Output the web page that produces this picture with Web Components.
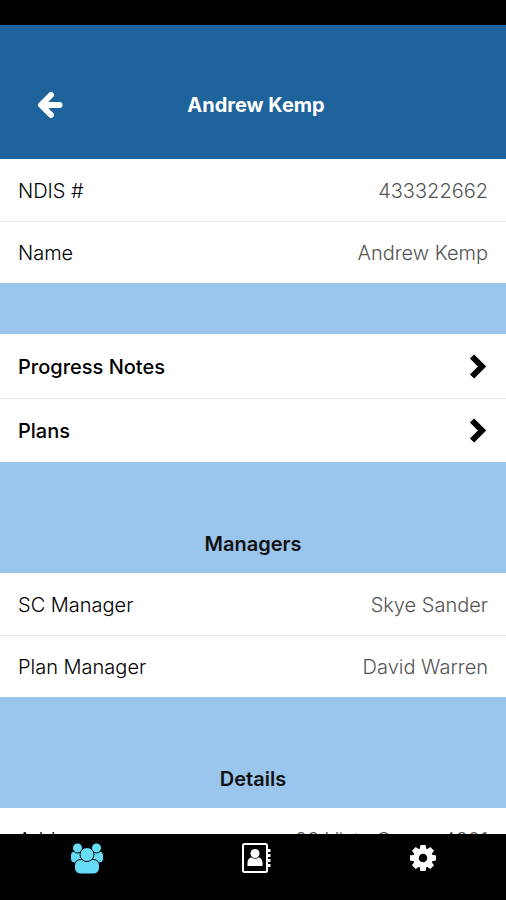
<!DOCTYPE html>
<html lang="en">
<head>
<meta charset="utf-8">
<meta name="viewport" content="width=device-width, initial-scale=1">
<title>Andrew Kemp</title>
<style>
  html, body { margin: 0; height: 100%; }
  body { font-family: Inter, "Liberation Sans", sans-serif; font-size: 20px; line-height: 24px; color: #111; background: #000; }
</style>
</head>
<body>
<client-screen>
  <client-header slot="header">Andrew Kemp</client-header>
  <row-group>
    <detail-row><span slot="label">NDIS #</span>433322662</detail-row>
    <detail-row><span slot="label">Name</span>Andrew Kemp</detail-row>
  </row-group>
  <section-band></section-band>
  <row-group>
    <link-row href="#notes">Progress Notes</link-row>
    <link-row href="#plans">Plans</link-row>
  </row-group>
  <section-band titled>Managers</section-band>
  <row-group>
    <detail-row><span slot="label">SC Manager</span>Skye Sander</detail-row>
    <detail-row><span slot="label">Plan Manager</span>David Warren</detail-row>
  </row-group>
  <section-band titled>Details</section-band>
  <row-group>
    <detail-row><span slot="label">Address</span>22 Vista Grove, 4301</detail-row>
  </row-group>
  <tab-bar slot="footer"></tab-bar>
</client-screen>
<script>
class BaseElement extends HTMLElement {
  constructor() {
    super();
    this.attachShadow({ mode: "open" }).innerHTML = this.constructor.markup;
  }
}

customElements.define("client-screen", class extends BaseElement {
  static markup = `
    <style>
      :host { display: flex; flex-direction: column; height: 100vh; box-sizing: border-box; padding-top: 25px; background: #000; }
      main { flex: 1; min-height: 0; overflow-y: auto; scrollbar-width: none; background: #9ac6ed; }
    </style>
    <slot name="header"></slot>
    <main><slot></slot></main>
    <slot name="footer"></slot>`;
});

customElements.define("client-header", class extends BaseElement {
  static markup = `
    <style>
      :host { display: grid; grid-template-columns: 64px 1fr 58px; align-items: center; flex: none; box-sizing: border-box; height: 134px; padding: 26px 18px 0; background: #1f639c; color: #fff; }
      h1 { margin: 0; font-size: 20px; line-height: 24px; font-weight: 700; text-align: center; }
      button { display: grid; place-items: center; width: 64px; height: 48px; padding: 0; border: 0; background: none; color: inherit; }
      svg { display: block; }
    </style>
    <button type="button" aria-label="Back">
      <svg width="26" height="28" viewBox="0 0 26 28" fill="none" stroke="currentColor" stroke-width="6" stroke-linecap="round" stroke-linejoin="round"><path d="M7 14H22.500M14 4L4 14L14 24"/><path d="M0.500 14L12 3V25z" fill="currentColor" stroke="none"/></svg>
    </button>
    <h1><slot></slot></h1>`;
});

customElements.define("row-group", class extends BaseElement {
  static markup = `
    <style>
      :host { display: block; background: #fff; }
      ::slotted(*) { border-top: 1px solid #e8e8e8; }
      ::slotted(:first-child) { border-top-color: #fff; }
    </style>
    <slot></slot>`;
});

customElements.define("detail-row", class extends BaseElement {
  static markup = `
    <style>
      :host { display: block; font-weight: 300; }
      dl { display: flex; justify-content: space-between; align-items: center; gap: 16px; margin: 0; padding: 19px 18px 18px; }
      dd { margin: 0; color: #555; text-align: right; }
      dt { color: #000; }
    </style>
    <dl><dt><slot name="label"></slot></dt><dd><slot></slot></dd></dl>`;
});

customElements.define("section-band", class extends BaseElement {
  static markup = `
    <style>
      :host { display: block; height: 51px; background: #9ac6ed; }
      :host([titled]) { display: flex; height: auto; justify-content: center; padding: 70px 18px 17px; }
      h2 { margin: 0; font-size: 20px; line-height: 24px; font-weight: 600; }
      :host(:not([titled])) h2 { display: none; }
    </style>
    <h2><slot></slot></h2>`;
});

customElements.define("link-row", class extends BaseElement {
  static markup = `
    <style>
      :host { display: block; }
      a { display: flex; justify-content: space-between; align-items: center; gap: 16px; padding: 19px 18px 17px; line-height: 27px; color: #000; font-weight: 500; text-decoration: none; }
      svg { display: block; }
    </style>
    <a><slot></slot><svg aria-hidden="true" width="19" height="27" viewBox="0 1 19 27" fill="none" stroke="#000" stroke-width="6"><path d="M3 3.500L13 13.500L3 23.500"/></svg></a>`;
  connectedCallback() {
    this.shadowRoot.querySelector("a").href = this.getAttribute("href");
  }
});

customElements.define("tab-bar", class extends BaseElement {
  static markup = `
    <style>
      :host { display: block; flex: none; background: #000; color: #fff; }
      nav { display: grid; grid-template-columns: repeat(3, 1fr); column-gap: 1px; height: 66px; padding-left: 4px; }
      a { display: flex; justify-content: center; align-items: flex-start; padding-top: 8px; color: inherit; }
      a[aria-current] { color: #66dcf7; }
      svg { display: block; }
    </style>
    <nav aria-label="Main">
      <a href="#clients" aria-label="Clients" aria-current="page">
        <svg width="34" height="32" viewBox="0 0 34 32" fill="currentColor" stroke="#000" stroke-width="1">
          <rect x="0.500" y="9" width="12" height="12" rx="4"/><rect x="21.500" y="9" width="12" height="12" rx="4"/>
          <circle cx="7.500" cy="6" r="5"/><circle cx="26.500" cy="6" r="5"/>
          <rect x="4.500" y="17.500" width="25" height="14.500" rx="6"/>
          <circle cx="17" cy="12.500" r="7"/>
        </svg>
      </a>
      <a href="#contacts" aria-label="Contacts">
        <svg width="32" height="32" viewBox="-2 0 32 32" fill="none" stroke="currentColor" stroke-width="2">
          <rect x="2" y="2" width="24" height="28" rx="1.500"/>
          <path d="M27 8.500h2.500M27 13.500h2.500M27 18.500h2.500M27 23.500h2.500" stroke-width="3"/>
          <circle cx="14" cy="11.500" r="4.500" fill="currentColor" stroke="none"/>
          <path d="M6.500 24v-3c0-3 1.500-5.500 4-5.500q3.500 2.500 7 0c2.500 0 4 2.500 4 5.500v3z" fill="currentColor" stroke="none"/>
        </svg>
      </a>
      <a href="#settings" aria-label="Settings">
        <svg width="26" height="32" viewBox="-13 -16 26 32" fill="currentColor">
          <defs><path id="tooth" d="M-3.500-8L-2.600-13H2.600L3.500-8z"/></defs>
          <use href="#tooth"/><use href="#tooth" transform="rotate(45)"/><use href="#tooth" transform="rotate(90)"/><use href="#tooth" transform="rotate(135)"/><use href="#tooth" transform="rotate(180)"/><use href="#tooth" transform="rotate(225)"/><use href="#tooth" transform="rotate(270)"/><use href="#tooth" transform="rotate(315)"/>
          <circle r="7" fill="none" stroke="currentColor" stroke-width="5.500"/>
        </svg>
      </a>
    </nav>`;
});
</script>
</body>
</html>
